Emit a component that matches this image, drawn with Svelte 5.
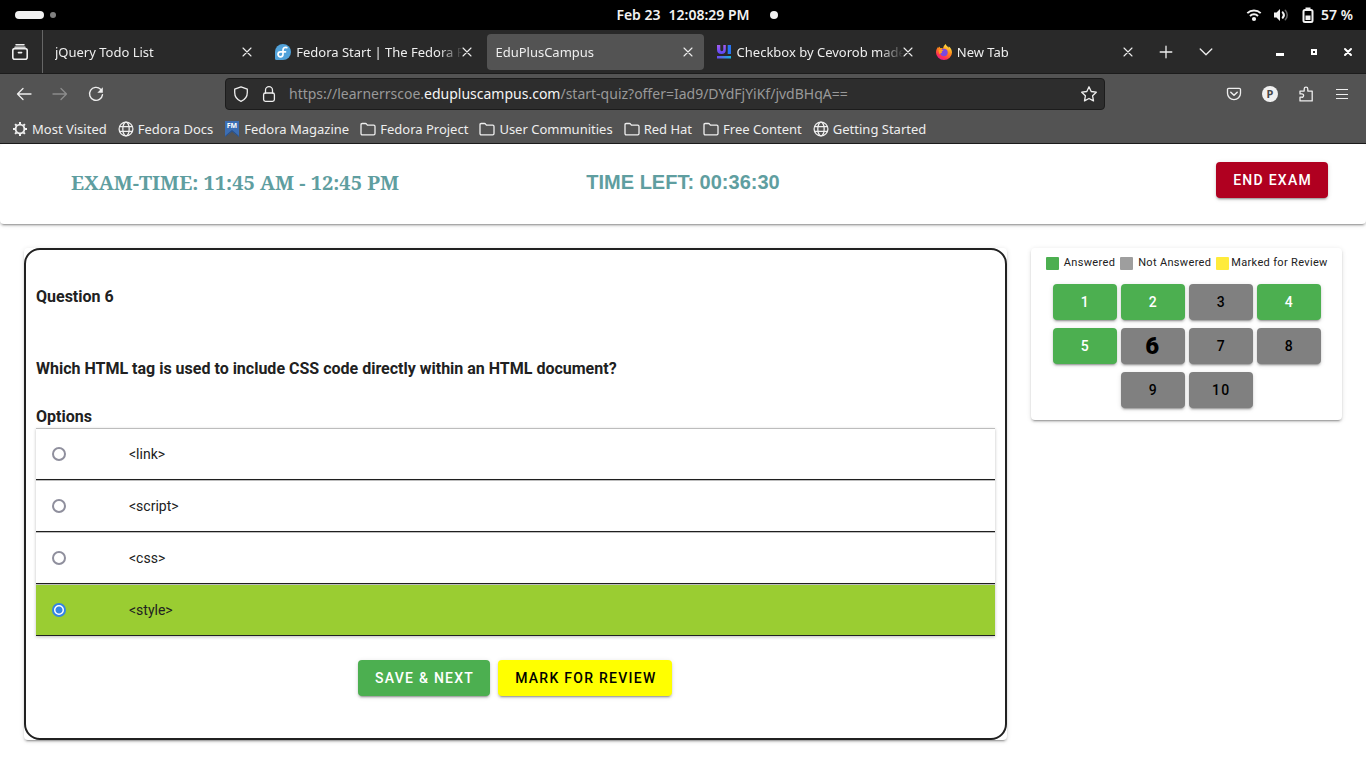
<script>
  const tabs = [
    { title: 'jQuery Todo List', icon: null },
    { title: 'Fedora Start | The Fedora P', icon: 'fedora' },
    { title: 'EduPlusCampus', icon: null, active: true },
    { title: 'Checkbox by Cevorob made', icon: 'ui' },
    { title: 'New Tab', icon: 'firefox' }
  ];
  const bookmarks = [
    { label: 'Most Visited', icon: 'gear' },
    { label: 'Fedora Docs', icon: 'globe' },
    { label: 'Fedora Magazine', icon: 'fm' },
    { label: 'Fedora Project', icon: 'folder' },
    { label: 'User Communities', icon: 'folder' },
    { label: 'Red Hat', icon: 'folder' },
    { label: 'Free Content', icon: 'folder' },
    { label: 'Getting Started', icon: 'globe' }
  ];
  const options = ['<link>', '<script' + '>', '<css>', '<style' + '>'];
  const answered = [1, 2, 4, 5];
  const questions = Array.from({ length: 10 }, (_, i) => i + 1);
  let selected = $state(3);
  let current = $state(6);
</script>

{#snippet icon(name)}
  <svg class="icon" viewBox="0 0 16 16" width="16" height="16" fill="none" stroke="currentColor" stroke-width="1.3" stroke-linecap="round" stroke-linejoin="round" aria-hidden="true">
    {#if name === 'archive'}
      <path d="M4 .8h8" stroke-width="1.500" /><path d="M3 3.200h10" /><rect x="0.800" y="4.600" width="14.400" height="10.600" rx="2" stroke-width="1.600" /><path d="M6.400 8.600h3.200" stroke-width="1.600" />
    {:else if name === 'close'}
      <path d="M4 4l8 8M12 4l-8 8" stroke-width="1.1" />
    {:else if name === 'plus'}
      <path d="M8 2.200v11.600M2.200 8h11.600" />
    {:else if name === 'chevron'}
      <path d="M2.200 5l5.800 5.800L13.800 5" />
    {:else if name === 'minimize'}
      <path d="M4 9h8v3H4z" fill="currentColor" stroke="none" />
    {:else if name === 'maximize'}
      <path d="M5 5h6v6H5zM7 7v2h2V7z" fill="currentColor" fill-rule="evenodd" stroke="none" />
    {:else if name === 'quit'}
      <path d="M5 5l6 6M11 5l-6 6" stroke-width="2" />
    {:else if name === 'back'}
      <path d="M15 8H1.500M7 2.500L1.500 8l5.500 5.500" />
    {:else if name === 'forward'}
      <path d="M1 8h13.500M9 2.500L14.500 8 9 13.500" />
    {:else if name === 'reload'}
      <path d="M12.600 3.200A6.500 6.500 0 1 0 14.500 8.600" stroke-width="1.400" /><path d="M14.800 1.200v5.600H9.300z" fill="currentColor" stroke="none" />
    {:else if name === 'shield'}
      <path d="M8 0.800L14.300 3.200v3.300c0 3.800-2.200 7.200-6.300 8.800-4.100-1.600-6.300-5-6.300-8.800V3.200z" />
    {:else if name === 'lock'}
      <rect x="2.600" y="7" width="10.800" height="8.300" rx="1.800" /><path d="M4.500 7V4.200a3.500 3.500 0 0 1 7 0V7" />
    {:else if name === 'star'}
      <path d="M8 0.800l2.200 4.700 5.100.7-3.700 3.600.9 5.100L8 12.500l-4.500 2.400.9-5.100L.7 6.200l5.100-.7z" />
    {:else if name === 'pocket'}
      <path d="M2.700 2.300h10.600q1.200 0 1.200 1.200v3.700a6.500 6.500 0 0 1-13 0V3.500q0-1.200 1.200-1.200z" /><path d="M4.800 6.200L8 9.200l3.200-3" stroke-width="1.500" />
    {:else if name === 'puzzle'}
      <path d="M2 14.900V11.200h1.500a1.700 1.700 0 1 0 0-3.300H2V5.100h4.200V2.900a1.800 1.800 0 0 1 3.600 0v2.200h4.400v9.800z" />
    {:else if name === 'menu'}
      <path d="M2 3.500h12M2 8.500h12M2 12.500h12" stroke-width="1.200" stroke-linecap="butt" />
    {:else if name === 'gear'}
      <circle cx="8" cy="8" r="4.400" stroke-width="1.900" /><path d="M8 1v2.200M8 12.800V15M1 8h2.200M12.800 8H15M3.100 3.100l1.400 1.400M11.500 11.500l1.400 1.400M3.100 12.900l1.400-1.400M11.500 4.500l1.400-1.400" stroke-width="2" stroke-linecap="butt" />
    {:else if name === 'globe'}
      <circle cx="8" cy="8" r="6.900" /><ellipse cx="8" cy="8" rx="3.200" ry="6.900" /><path d="M1.700 5.700h12.600M1.700 10.300h12.600" />
    {:else if name === 'folder'}
      <path d="M1 12.500V3.700Q1 2.500 2.200 2.500h3.300q.7 0 1.100.6l.8 1.100h6.300q1.300 0 1.300 1.300v7q0 1.300-1.300 1.300H2.300Q1 13.800 1 12.500z" />
    {:else if name === 'fm'}
      <path d="M1 0h14v16L8 10.500 1 16z" fill="#3c6eb4" stroke="none" /><path d="M1 16V15l7-6 7 6v1l-7-5.500z" fill="#294e84" stroke="none" />
      <text x="8" y="7" text-anchor="middle" font-size="7" font-weight="700" fill="#fff" stroke="none">FM</text>
    {:else if name === 'fedora'}
      <path d="M8 0a8 8 0 1 1 0 16H1.500Q0 16 0 14.500V8a8 8 0 0 1 8-8z" fill="#51a2da" stroke="none" /><path d="M11.800 3.600C9.700 2.800 8 3.900 8 6v4.300a2.500 2.500 0 1 1-2.500-2.500h5" stroke="#fff" stroke-width="1.700" />
    {:else if name === 'ui'}
      <defs><linearGradient id="ui-a" x1="0" y1="0" x2="0" y2="1"><stop stop-color="#a45cf0" /><stop offset="1" stop-color="#5a48f5" /></linearGradient><linearGradient id="ui-b"><stop stop-color="#7049f0" /><stop offset="1" stop-color="#18b7dc" /></linearGradient></defs>
      <path d="M1 1h3.300v4.500q0 1.800 1.500 1.800t1.500-1.800V1h2.500v4.700q0 4.300-4.300 4.300T1 5.700z" fill="url(#ui-a)" stroke="none" /><path d="M11.700 1H15v9h-3.300z" fill="#2774f3" stroke="none" /><path d="M1 12h14v2.500H1z" fill="url(#ui-b)" stroke="none" />
    {:else if name === 'firefox'}
      <defs><linearGradient id="fx-a" x1="0.800" y1="0" x2="0.300" y2="1"><stop stop-color="#fff34d" /><stop offset="0.450" stop-color="#ff8b16" /><stop offset="0.800" stop-color="#ff3150" /><stop offset="1" stop-color="#e5179b" /></linearGradient></defs>
      <path d="M9.800 0c.3 1.800 1.700 2.500 2.900 3.700.2-.6 0-1-.1-1.400 2.200 1.600 3.400 3.800 3.400 6.200a8 7.500 0 0 1-16 0c0-2.300.9-4.200 2.200-5.700l.3 1.200 1.400-1.400.2 1.600c1.100-.3 2.300-.1 3.100.4C7.200 2.800 8.200 1 9.800 0z" fill="url(#fx-a)" stroke="none" /><circle cx="8" cy="8.500" r="3.700" fill="#7b48df" stroke="none" /><path d="M2.600 6.300c1.700-1.500 3.700-.6 4.900.5-2 .1-2.200 1-1.300 1.800L3.300 10z" fill="#ffa21c" stroke="none" />
    {:else if name === 'wifi'}
      <path d="M1.300 6.200a9.500 9.500 0 0 1 13.400 0M4 9a5.600 5.600 0 0 1 8 0" stroke-width="1.900" stroke-linecap="butt" /><circle cx="8" cy="12" r="2.100" fill="currentColor" stroke="none" />
    {:else if name === 'sound'}
      <path d="M1 5.500h2.500L7 2v12l-3.500-3.500H1z" fill="currentColor" stroke="none" /><path d="M9.700 5.300a4 4 0 0 1 0 5.400" stroke-width="2" /><path d="M12.300 3.200a7 7 0 0 1 0 9.600" stroke="#666" stroke-width="1.500" />
    {:else if name === 'battery'}
      <rect x="3.500" y="3" width="9" height="12" rx="1.500" stroke-width="2" /><path d="M5.500.5h5V3h-5zM5.500 8.500h5V13h-5z" fill="currentColor" stroke="none" />
    {/if}
  </svg>
{/snippet}

<div class="system-bar">
  <div class="workspaces"><span class="pill"></span><span class="dot"></span></div>
  <div class="clock"><span>Feb 23</span><span>12:08:29 PM</span><span class="notice"></span></div>
  <div class="status">{@render icon('wifi')}{@render icon('sound')}{@render icon('battery')}<span>57 %</span></div>
</div>

<header class="browser">
  <div class="tab-bar">
    <button class="recent" aria-label="Recent browsing">{@render icon('archive')}</button>
    <div class="tabs">
      {#each tabs as tab}
        <div class="tab" class:active={tab.active}>
          {#if tab.icon}{@render icon(tab.icon)}{/if}
          <span class="tab-title">{tab.title}</span>
          <button aria-label="Close tab">{@render icon('close')}</button>
        </div>
      {/each}
    </div>
    <div class="tab-tools">
      <button aria-label="New tab">{@render icon('plus')}</button>
      <button aria-label="List all tabs">{@render icon('chevron')}</button>
    </div>
    <div class="window-tools">
      <button aria-label="Minimize">{@render icon('minimize')}</button>
      <button aria-label="Maximize">{@render icon('maximize')}</button>
      <button aria-label="Close window">{@render icon('quit')}</button>
    </div>
  </div>

  <div class="nav-bar">
    <div class="nav-group">
      <button aria-label="Back">{@render icon('back')}</button>
      <button aria-label="Forward" disabled>{@render icon('forward')}</button>
      <button aria-label="Reload">{@render icon('reload')}</button>
    </div>
    <div class="url">
      {@render icon('shield')}
      {@render icon('lock')}
      <a class="address" href="#address">https://learnerrscoe.<b>edupluscampus.com</b>/start-quiz?offer=Iad9/DYdFjYiKf/jvdBHqA==</a>
      <button aria-label="Bookmark this page">{@render icon('star')}</button>
    </div>
    <div class="nav-group">
      <button aria-label="Save to Pocket">{@render icon('pocket')}</button>
      <button aria-label="Account"><span class="avatar">P</span></button>
      <button aria-label="Extensions">{@render icon('puzzle')}</button>
      <button aria-label="Application menu">{@render icon('menu')}</button>
    </div>
  </div>

  <nav class="bookmarks">
    {#each bookmarks as mark}
      <a href="#bookmark">{@render icon(mark.icon)}{mark.label}</a>
    {/each}
  </nav>
</header>

<main>
  <section class="exam-bar">
    <h1 class="exam-time">EXAM-TIME: 11:45 AM - 12:45 PM</h1>
    <h2 class="time-left">TIME LEFT: 00:36:30</h2>
    <button class="btn red">END EXAM</button>
  </section>

  <div class="columns">
    <div class="col-main">
      <div class="card">
        <form class="question" onsubmit={(e) => e.preventDefault()}>
          <h3>Question 6</h3>
          <p class="prompt">Which HTML tag is used to include CSS code directly within an HTML document?</p>
          <fieldset>
            <legend>Options</legend>
            {#each options as option, i}
              <label class="option" class:chosen={selected === i}>
                <input type="radio" name="answer" value={i} bind:group={selected} />
                <span>{option}</span>
              </label>
            {/each}
          </fieldset>
          <div class="actions">
            <button type="submit" class="btn green">SAVE &amp; NEXT</button>
            <button type="button" class="btn yellow">MARK FOR REVIEW</button>
          </div>
        </form>
      </div>
    </div>

    <aside class="col-side">
      <div class="card palette">
        <div class="key">
          <span><i class="swatch done"></i>Answered</span>
          <span><i class="swatch todo"></i>Not Answered</span>
          <span class="tight"><i class="swatch review"></i>Marked for Review</span>
        </div>
        <div class="numbers">
          {#each questions as n}
            <button class="btn {answered.includes(n) ? 'green' : 'grey'}" class:current={n === current} onclick={() => (current = n)}>{n}</button>
          {/each}
        </div>
      </div>
    </aside>
  </div>
</main>

<style>
  :global(body) {
    background: #fff;
    color: #212121;
    font-family: Roboto, sans-serif;
  }
  :global(button) {
    padding: 0;
    border: 0;
    background: none;
    color: inherit;
    font: inherit;
    cursor: pointer;
  }
  .icon { display: block; flex: none; }
  h1, h2, h3, p { margin: 0; }

  .system-bar {
    display: grid;
    grid-template-columns: 1fr auto 1fr;
    align-items: center;
    height: 30px;
    padding: 0 13px 0 15px;
    background: #000;
    color: #f2f2f2;
    font: 600 14px/30px "Noto Sans", sans-serif;
  }
  .workspaces { display: flex; align-items: center; gap: 6px; }
  .pill { width: 29px; height: 8px; border-radius: 4px; background: #f2f2f2; }
  .dot { width: 6px; height: 6px; border-radius: 3px; background: #808080; }
  .clock { display: flex; align-items: center; gap: 8px; padding-left: 26px; }
  .notice { width: 8px; height: 8px; margin-left: 12px; border-radius: 4px; background: #f2f2f2; }
  .status { display: flex; align-items: center; justify-content: flex-end; gap: 11px; }
  .status span { margin-left: -6px; }

  .browser { font: 13px/20px "Noto Sans", sans-serif; color: #eee; background: #535353; border-bottom: 1px solid #1c1c1c; }
  .browser button { display: grid; place-items: center; flex: none; }
  .tab-bar { display: flex; height: 43px; background: #292929; border-bottom: 1px solid #1c1c1c; }
  .browser .recent { width: 43px; padding-right: 2px; border-right: 1px solid #666; }
  .tabs { flex: 1; min-width: 0; display: flex; gap: 4px; padding: 4px 2px 3px 4px; }
  .tab {
    flex: 1 1 0;
    min-width: 0;
    display: flex;
    align-items: center;
    gap: 5px;
    padding: 0 8px;
    border-radius: 4px;
  }
  .tab.active { background: #535353; }
  .tab button { margin-left: -9px; }
  .tab-title {
    flex: 1;
    min-width: 0;
    overflow: hidden;
    white-space: nowrap;
    mask-image: linear-gradient(to left, transparent, #000 24px);
  }
  .tab-tools { display: flex; }
  .tab-tools button { width: 40px; }
  .window-tools { display: flex; padding: 0 1px 0 37px; }
  .window-tools button { width: 34px; color: #fff; }

  .nav-bar { display: flex; align-items: center; height: 40px; padding: 0 6px; }
  .nav-group { display: flex; }
  .nav-group button { width: 36px; height: 32px; }
  .nav-group button:disabled { color: #8c8c8c; }
  .url {
    flex: 1;
    min-width: 0;
    display: flex;
    align-items: center;
    gap: 12px;
    height: 30px;
    margin: 0 111px;
    padding: 0 7px;
    border: 1px solid #1c1c1c;
    border-radius: 4px;
    background: #2d2d2d;
  }
  .address { flex: 1; overflow: hidden; white-space: nowrap; color: #999; font-size: 14px; text-decoration: none; }
  .address b { font-weight: 400; color: #f5f5f5; }
  .avatar {
    width: 16px;
    height: 16px;
    border-radius: 8px;
    background: #f0f0f0;
    color: #484848;
    font: 700 11px/16px "Noto Sans", sans-serif;
  }
  .bookmarks { display: flex; gap: 11px; height: 29px; padding: 0 12px; }
  .bookmarks a {
    display: flex;
    align-items: center;
    gap: 4px;
    white-space: nowrap;
    color: #eee;
    text-decoration: none;
  }

  .exam-bar {
    display: grid;
    grid-template-columns: 1fr auto 1fr;
    align-items: center;
    height: 80px;
    border-radius: 4px;
    box-shadow: 0 3px 1px -2px rgba(0, 0, 0, .2), 0 2px 2px 0 rgba(0, 0, 0, .14), 0 1px 5px 0 rgba(0, 0, 0, .12);
    color: cadetblue;
  }
  .exam-time { padding: 0 0 2px 71px; font: 700 20px/28px "Noto Serif", "Liberation Serif", serif; }
  .time-left { padding-bottom: 4px; font: 700 20px/28px "Liberation Sans", sans-serif; }
  .exam-bar .btn { justify-self: end; margin: 0 38px 8px 0; }

  .btn {
    height: 36px;
    min-width: 64px;
    padding: 0 16px 0 17px;
    border-radius: 4px;
    font: 500 14px/36px Roboto, sans-serif;
    letter-spacing: 0.09em;
    box-shadow: 0 3px 1px -2px rgba(0, 0, 0, .2), 0 2px 2px 0 rgba(0, 0, 0, .14), 0 1px 5px 0 rgba(0, 0, 0, .12);
  }
  .red { background: #b00020; color: #fff; }
  .green { background: #4caf50; color: #fff; }
  .yellow { background: #ff0; color: #000; }
  .grey { background: #808080; color: #000; }

  .columns { display: flex; padding: 12px; }
  .col-main { flex: 0 0 75%; box-sizing: border-box; padding: 12px; }
  .col-side { flex: 0 0 25%; box-sizing: border-box; padding: 12px; }
  .card {
    border-radius: 4px;
    background: #fff;
    box-shadow: 0 3px 1px -2px rgba(0, 0, 0, .2), 0 2px 2px 0 rgba(0, 0, 0, .14), 0 1px 5px 0 rgba(0, 0, 0, .12);
  }
  .question { padding: 35px 10px 42px; border: 2px solid #212121; border-radius: 16px; }
  .question h3, .prompt, legend { font-size: 16px; font-weight: 700; line-height: 24px; }
  .prompt { margin: 48px 0 24px; }
  fieldset { min-width: 0; margin: 0; padding: 0; border: 0; }
  legend { display: block; margin-bottom: -1px; padding: 0; }
  .option {
    display: flex;
    align-items: center;
    gap: 63px;
    height: 50px;
    padding: 0 16px;
    border-top: 1px solid #bdbdbd;
    border-bottom: 1px solid #212121;
    background: #fff;
    box-shadow: 0 1px 3px rgba(0, 0, 0, .25);
    font-size: 14px;
  }
  .option.chosen { background: #9acd32; }
  .option input {
    appearance: none;
    width: 14px;
    height: 14px;
    margin: 0;
    border: 2px solid #8f8f9d;
    border-radius: 50%;
    background: #fff;
  }
  .option input:checked { border-color: #3584e4; background: radial-gradient(circle, #3584e4 3px, #fff 4px); }
  .actions { display: flex; justify-content: center; gap: 8px; margin-top: 24px; }

  .palette { padding: 4px 12px 12px 13px; }
  .key { display: flex; justify-content: center; gap: 5px; height: 22px; font-size: 11px; line-height: 22px; letter-spacing: 0.03em; white-space: nowrap; }
  .key span { display: flex; align-items: center; gap: 5px; }
  .key .tight { gap: 2px; }
  .swatch { width: 13px; height: 13px; border-radius: 1px; }
  .done { background: #4caf50; }
  .todo { background: #9e9e9e; }
  .review { background: #ffeb3b; }
  .numbers { display: flex; flex-wrap: wrap; justify-content: center; gap: 8px 4px; margin-top: 10px; }
  .current { font-size: 24px; font-weight: 900; }
</style>
